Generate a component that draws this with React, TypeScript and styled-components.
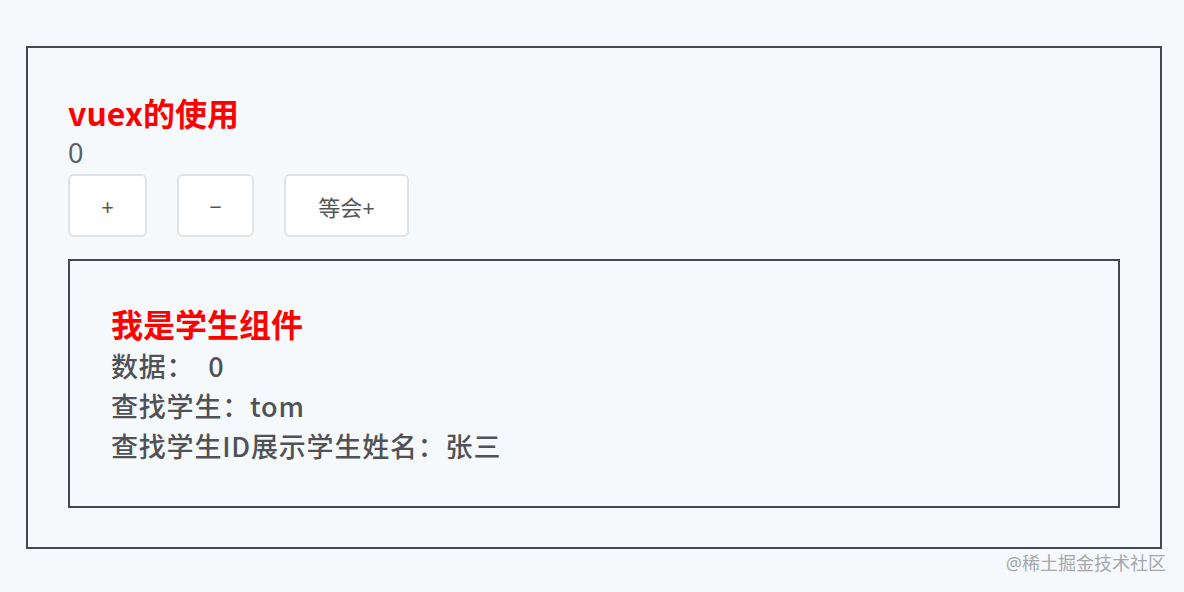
import styled, { createGlobalStyle } from 'styled-components';

const GlobalStyle = createGlobalStyle`
  html, body {
    margin: 0;
    padding: 0;
    background: #f6f9fc;
    font-family: "Noto Sans", "Noto Sans CJK SC", sans-serif;
  }
`;

// #region styled
const Page = styled.div`
  width: 1184px;
  height: 592px;
  box-sizing: border-box;
  padding: 46px 22px 0 26px;
  position: relative;
`;

const Frame = styled.div`
  border: 2px solid #45494f;
  padding: 44px 40px 39px 40px;
`;

const Heading = styled.div`
  color: #ff0000;
  font-family: "Noto Sans CJK SC", sans-serif;
  font-size: 32px;
  font-weight: 700;
  line-height: ${(p: { $lh?: number }) => p.$lh ?? 40}px;
`;

const Count = styled.div`
  color: #5e6166;
  font-size: 27px;
  line-height: 40px;
  margin-top: 1px;
`;

const Toolbar = styled.div`
  display: flex;
  gap: 30px;
  margin-top: 1px;
`;

const Button = styled.button`
  height: 63px;
  min-width: ${(p: { $w: number }) => p.$w}px;
  box-sizing: border-box;
  background: #ffffff;
  border: 2px solid #dfe2e6;
  border-radius: 6px;
  font-family: inherit;
  font-size: 22px;
  color: #555;
  padding: 0;
`;

const Student = styled.div`
  margin-top: 22px;
  border: 2px solid #45494f;
  padding: 39px 40px 40px 41px;
`;

const Line = styled.div`
  color: #505256;
  font-family: "Noto Sans CJK SC", sans-serif;
  font-size: 27px;
  font-weight: 500;
  line-height: 40px;
  letter-spacing: 0.8px;
`;

const Watermark = styled.div`
  position: absolute;
  right: 18px;
  bottom: 17px;
  color: #a4a8ad;
  font-size: 18px;
  line-height: 24px;
`;
// #endregion

const App = () => (
  <Page>
    <GlobalStyle />
    <Frame>
      <Heading>vuex的使用</Heading>
      <Count>0</Count>
      <Toolbar>
        <Button $w={79}>+</Button>
        <Button $w={77}>−</Button>
        <Button $w={125}>等会+</Button>
      </Toolbar>
      <Student>
        <Heading $lh={46}>我是学生组件</Heading>
        <Line>数据：&nbsp; 0</Line>
        <Line>查找学生：tom</Line>
        <Line>查找学生ID展示学生姓名：张三</Line>
      </Student>
    </Frame>
    <Watermark>@稀土掘金技术社区</Watermark>
  </Page>
);

export default App;
